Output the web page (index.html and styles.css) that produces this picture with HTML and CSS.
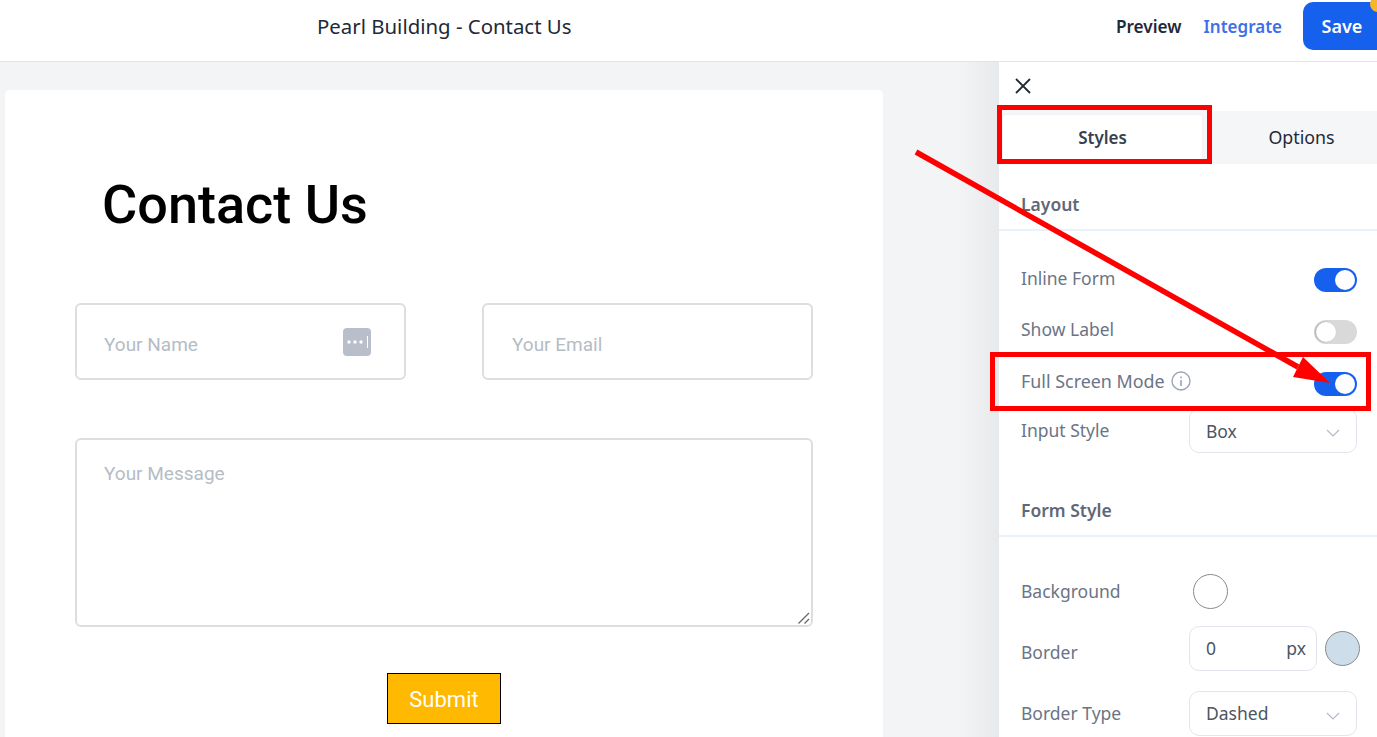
FILE: index.html
```html
<!DOCTYPE html>
<html lang="en">
<head>
<meta charset="utf-8">
<title>Pearl Building - Contact Us</title>
<link rel="stylesheet" href="styles.css">
</head>
<body>
<div class="app">
  <header class="topbar">
    <div class="title">Pearl Building - Contact Us</div>
    <nav class="actions">
      <a class="preview">Preview</a>
      <a class="integrate">Integrate</a>
      <button class="save">Save</button>
    </nav>
    <span class="dot"></span>
  </header>
  <div class="workspace">
    <main class="canvas">
      <section class="card">
        <h1 class="heading">Contact Us</h1>
        <div class="field-row">
          <div class="field">
            <span>Your Name</span>
            <svg class="keyicon" width="28" height="28" viewBox="0 0 28 28"><rect width="28" height="28" rx="4" fill="#b9bfca"/><circle cx="6" cy="14" r="1.7" fill="#fff"/><circle cx="12" cy="14" r="1.7" fill="#fff"/><circle cx="18" cy="14" r="1.7" fill="#fff"/><rect x="24" y="8" width="1" height="12" fill="#fff"/></svg>
          </div>
          <div class="field"><span>Your Email</span></div>
        </div>
        <div class="message">
          <span>Your Message</span>
          <svg class="grip" width="14" height="14" viewBox="0 0 14 14"><path d="M1.5 12.5 12 2M7.5 12.5 12 8" stroke="#666" stroke-width="1.3" fill="none"/></svg>
        </div>
        <button class="submit">Submit</button>
      </section>
    </main>
    <aside class="panel">
      <div class="closebar">
        <svg width="18" height="18" viewBox="0 0 18 18"><path d="M2 2 16 16M16 2 2 16" stroke="#1f2937" stroke-width="1.8" fill="none"/></svg>
      </div>
      <div class="tabs">
        <div class="tab active">Styles</div>
        <div class="tab">Options</div>
      </div>
      <h2 class="section-title first">Layout</h2>
      <div class="rows">
        <div class="row r-inline"><label>Inline Form</label><span class="toggle on"></span></div>
        <div class="row r-show"><label>Show Label</label><span class="toggle"></span></div>
        <div class="row r-full"><label>Full Screen Mode
          <svg class="info" width="20" height="20" viewBox="0 0 20 20"><circle cx="10" cy="10" r="9" fill="none" stroke="#9aa5b8" stroke-width="1.4"/><rect x="9.2" y="9" width="1.6" height="6" fill="#9aa5b8"/><rect x="9.2" y="5.5" width="1.6" height="1.8" fill="#9aa5b8"/></svg></label><span class="toggle on"></span></div>
        <div class="row r-input"><label>Input Style</label>
          <div class="select">Box<svg width="14" height="8" viewBox="0 0 14 8"><path d="M1 1 7 7 13 1" fill="none" stroke="#b4bac4" stroke-width="1.2"/></svg></div>
        </div>
      </div>
      <h2 class="section-title second">Form Style</h2>
      <div class="rows lower">
        <div class="row r-bg"><label>Background</label><span class="swatch white"></span></div>
        <div class="row r-border"><label>Border</label>
          <div class="unit-group"><div class="unit"><span>0</span><span>px</span></div><span class="swatch blue"></span></div>
        </div>
        <div class="row r-type"><label>Border Type</label>
          <div class="select">Dashed<svg width="14" height="8" viewBox="0 0 14 8"><path d="M1 1 7 7 13 1" fill="none" stroke="#b4bac4" stroke-width="1.2"/></svg></div>
        </div>
      </div>
    </aside>
  </div>
  <div class="mark mark-tab"></div>
  <div class="mark mark-row"></div>
  <svg class="arrow" width="1377" height="737" viewBox="0 0 1377 737"><path d="M916 152 1298 367" stroke="#f00" stroke-width="5.5" fill="none"/><path d="M1303 357 1293 377 1330 383Z" fill="#f00"/></svg>
</div>
</body>
</html>
```
FILE: styles.css
```css
* { box-sizing: border-box; }
html, body { margin: 0; height: 737px; overflow: hidden; background: #fff; }
body { font-family: "Noto Sans", "Open Sans", sans-serif; }
.app { position: relative; width: 1377px; height: 737px; overflow: hidden; }

.topbar { position: relative; height: 62px; display: flex; align-items: center; justify-content: space-between; padding-left: 317px; background: #fff; border-bottom: 1px solid #e2e3e5; }
.title { font-size: 20.4px; color: #1f2937; margin-top: -9px; }
.actions { display: flex; align-items: center; margin-top: -9px; }
.preview { font-size: 17.2px; font-weight: 600; color: #1f2937; margin-right: 22px; }
.integrate { font-size: 17px; font-weight: 600; color: #3f6fe8; margin-right: 21px; }
.save { width: 74px; height: 48px; border: 0; border-radius: 10px 0 0 10px; background: #1660ee; color: #fff; font: 600 18px "Noto Sans", sans-serif; padding: 0 0 0 4px; }
.dot { position: absolute; right: -9px; top: -4px; width: 16px; height: 16px; border-radius: 50%; background: #f7b52c; }

.workspace { display: flex; height: 675px; }
.canvas { width: 999px; background: linear-gradient(90deg, #f3f4f6 96%, #e8e9eb 100%); padding: 28px 0 0 5px; }
.card { width: 878px; height: 660px; background: #fff; border-radius: 5px; padding: 80px 70px 0; font-family: Roboto, sans-serif; display: flex; flex-direction: column; }
.heading { margin: 0 0 0 27px; font-size: 54px; line-height: 70px; font-weight: 500; color: #000; height: 133px; }
.field-row { display: flex; justify-content: space-between; }
.field { width: 331px; height: 77px; border: 2px solid #dedede; border-radius: 6px; display: flex; align-items: center; justify-content: space-between; padding: 0 33px 0 27px; color: #b5bcc4; font-size: 19px; }
.field:nth-child(2) { padding-left: 28px; }
.field span { position: relative; top: 3px; }
.keyicon { position: relative; }
.message { position: relative; height: 189px; margin-top: 58px; border: 2px solid #dedede; border-radius: 6px; padding: 22px 27px; color: #b5bcc4; font-size: 19px; }
.grip { position: absolute; right: 0; bottom: 0; }
.submit { align-self: center; width: 114px; height: 51px; margin-top: 46px; background: #ffb900; border: 1px solid #000; color: #fff; font: 400 22px Roboto, sans-serif; padding: 2px 0 0; }

.panel { width: 378px; background: #fff; color: #6b7486; font-size: 17.5px; }
.closebar { height: 49px; padding: 15px 0 0 15px; }
.closebar svg { display: block; }
.tabs { display: flex; height: 53px; background: #f5f6f8; padding: 4px; }
.tab { flex: 1; display: flex; align-items: center; justify-content: center; font-size: 17.8px; color: #1f2937; }
.tab.active { flex: 0 0 199px; background: #fff; border-radius: 3px; font-size: 17px; font-weight: 600; color: #374151; box-shadow: 0 0 2px #e5e7eb; }
.tab:not(.active) { padding: 0 0 2px 28px; }
.section-title { margin: 0; padding: 0 22px; font-size: 17.5px; font-weight: 600; color: #5f6878; border-bottom: 2px solid #e8f2fb; line-height: 24px; }
.section-title.first { padding-top: 28px; height: 67px; }
.section-title.second { padding-top: 0; height: 39px; margin-top: 45px; }
.rows { padding: 37px 20px 0 22px; display: flex; flex-direction: column; }
.rows.lower { padding-top: 37px; }
.row { display: flex; align-items: center; justify-content: space-between; }
.row label { display: flex; align-items: center; gap: 6px; position: relative; top: -3px; }
.r-inline label { top: -2px; }
.r-inline, .r-show, .r-full { height: 24px; margin-bottom: 28px; }
.r-full { margin-bottom: 12px; }
.r-full label { font-size: 17.9px; }
.r-input { height: 45px; }
.r-input label { top: -1px; }
.r-bg { height: 35px; margin-bottom: 16px; }
.r-border { height: 46px; margin-bottom: 19px; }
.r-bg { justify-content: flex-start; }
.r-bg label { width: 172px; top: -1px; }
.r-border label { top: 4px; }
.r-type label { top: 0; }
.r-type { height: 46px; }
.info { display: block; }

.toggle { position: relative; width: 43px; height: 24px; border-radius: 12px; background: #d9d9d9; flex: none; }
.toggle::after { content: ""; position: absolute; left: 2px; top: 2px; width: 20px; height: 20px; border-radius: 50%; background: #fff; box-shadow: -1px 0 2px rgba(0,0,0,.25); }
.toggle.on { background: #1660ee; }
.toggle.on::after { left: 21px; box-shadow: none; }

.select { width: 168px; height: 45px; border: 1px solid #e2e5ec; border-radius: 10px; display: flex; align-items: center; justify-content: space-between; padding: 0 16px 0 16px; color: #4b5563; font-size: 17.5px; }
.select svg { margin-top: 5px; }
.unit-group { display: flex; align-items: center; gap: 8px; margin-right: -3px; }
.unit { width: 128px; height: 45px; border: 1px solid #e2e5ec; border-radius: 10px; display: flex; align-items: center; justify-content: space-between; padding: 0 10px 0 16px; color: #4b5563; font-size: 17.5px; }
.swatch { display: block; width: 35px; height: 35px; border-radius: 50%; border: 1px solid #8a8a8a; }
.swatch.white { background: #fff; }
.swatch.blue { background: #cddeea; }

.mark { position: absolute; border: 5px solid #f00; pointer-events: none; }
.mark-tab { left: 997px; top: 105px; width: 215px; height: 59px; }
.mark-row { left: 990px; top: 352px; width: 381px; height: 59px; }
.arrow { position: absolute; left: 0; top: 0; pointer-events: none; }
```
